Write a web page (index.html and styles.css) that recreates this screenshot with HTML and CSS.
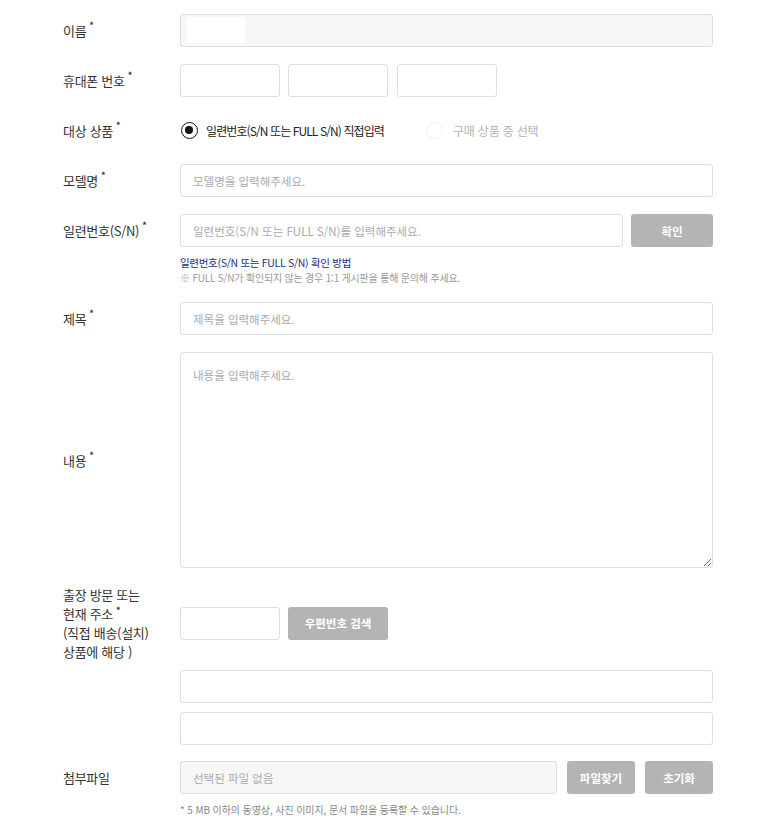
FILE: index.html
```html
<!DOCTYPE html>
<html lang="ko">
<head>
<meta charset="utf-8">
<title>문의하기</title>
<link rel="stylesheet" href="styles.css">
</head>
<body>
<form class="form">
  <div class="row">
    <div class="label">이름<span class="req">*</span></div>
    <div class="field">
      <div class="masked"><input class="input readonly" type="text" readonly><span class="mask"></span></div>
    </div>
  </div>

  <div class="row">
    <div class="label">휴대폰 번호<span class="req">*</span></div>
    <div class="field phone">
      <input class="input short" type="text">
      <input class="input short" type="text">
      <input class="input short" type="text">
    </div>
  </div>

  <div class="row">
    <div class="label">대상 상품<span class="req">*</span></div>
    <div class="field radios">
      <label class="radio on"><span class="dot"></span>일련번호(S/N 또는 FULL S/N) 직접입력</label>
      <label class="radio off"><span class="dot"></span>구매 상품 중 선택</label>
    </div>
  </div>

  <div class="row">
    <div class="label">모델명<span class="req">*</span></div>
    <div class="field"><input class="input" type="text" placeholder="모델명을 입력해주세요."></div>
  </div>

  <div class="row top">
    <div class="label">일련번호(S/N)<span class="req">*</span></div>
    <div class="field">
      <div class="inline">
        <input class="input grow" type="text" placeholder="일련번호(S/N 또는 FULL S/N)를 입력해주세요.">
        <button type="button" class="btn wide">확인</button>
      </div>
      <a class="help-link">일련번호(S/N 또는 FULL S/N) 확인 방법</a>
      <p class="help-note">※ FULL S/N가 확인되지 않는 경우 1:1 게시판을 통해 문의해 주세요.</p>
    </div>
  </div>

  <div class="row">
    <div class="label">제목<span class="req">*</span></div>
    <div class="field"><input class="input" type="text" placeholder="제목을 입력해주세요."></div>
  </div>

  <div class="row">
    <div class="label">내용<span class="req">*</span></div>
    <div class="field"><textarea class="textarea" placeholder="내용을 입력해주세요."></textarea></div>
  </div>

  <div class="row tight">
    <div class="label multi">출장 방문 또는<br>현재 주소<span class="req">*</span><br>(직접 배송(설치)<br>상품에 해당 )</div>
    <div class="field inline">
      <input class="input short" type="text">
      <button type="button" class="btn postal">우편번호 검색</button>
    </div>
  </div>
  <div class="row tight">
    <div class="label"></div>
    <div class="field"><input class="input" type="text"></div>
  </div>
  <div class="row addr-last">
    <div class="label"></div>
    <div class="field"><input class="input" type="text"></div>
  </div>

  <div class="row top">
    <div class="label">첨부파일</div>
    <div class="field">
      <div class="inline">
        <input class="input grow readonly" type="text" placeholder="선택된 파일 없음" readonly>
        <button type="button" class="btn file">파일찾기</button>
        <button type="button" class="btn file">초기화</button>
      </div>
      <p class="file-note">* 5 MB 이하의 동영상, 사진 이미지, 문서 파일을 등록할 수 있습니다.</p>
    </div>
  </div>
</form>
</body>
</html>
```

FILE: styles.css
```css
* { box-sizing: border-box; }
html, body { margin: 0; padding: 0; background: #fff; }
body {
  font-family: "Noto Sans CJK KR", "Noto Sans", sans-serif;
  color: #333;
}
.form {
  padding: 14px 0 0 63px;
  width: 713px;
}
.row {
  display: grid;
  grid-template-columns: 117px 533px;
  align-items: center;
  margin-bottom: 17px;
}
.row.top { align-items: start; }
.row.tight { margin-bottom: 9px; }
.row.addr-last { margin-bottom: 16px; }

.label {
  font-size: 13px;
  color: #333;
  min-height: 33px;
  display: flex;
  align-items: center;
  line-height: 19px;
  letter-spacing: -0.3px;
}
.label.multi { display: block; min-height: 0; }
.req {
  font-size: 9px;
  font-weight: 700;
  position: relative;
  top: -5px;
  margin-left: 3px;
  line-height: 1;
}
.field { min-width: 0; }

.input {
  display: block;
  width: 100%;
  height: 33px;
  border: 1px solid #dedede;
  border-radius: 3px;
  background: #fff;
  padding: 0 12px;
  font-family: inherit;
  font-size: 11.5px;
  color: #333;
  outline: none;
}
.input::placeholder { color: #aaa; }
.input.readonly { background: #f7f7f7; }
.input.short { width: 100px; flex: none; }
.input.grow { flex: 1; width: auto; min-width: 0; }

.masked { position: relative; }
.mask {
  position: absolute;
  left: 7px;
  top: 3px;
  width: 58px;
  height: 26px;
  background: #fff;
}

.phone { display: flex; gap: 8px; }
.phone .input:nth-child(3) { margin-left: 1px; }

.inline { display: flex; gap: 8px; align-items: center; }

.radios {
  display: flex;
  align-items: center;
  height: 33px;
}
.radio {
  display: flex;
  align-items: center;
  font-size: 12px;
  letter-spacing: -0.9px;
}
.radio .dot {
  width: 17px;
  height: 17px;
  border-radius: 50%;
  margin-right: 8px;
  position: relative;
  flex: none;
}
.radio.on { color: #222; margin-left: 1px; margin-right: 42px; }
.radio.on .dot { border: 1.5px solid #111; }
.radio.on .dot::after {
  content: "";
  position: absolute;
  left: 3px; top: 3px;
  width: 8px; height: 8px;
  border-radius: 50%;
  background: #111;
}
.radio.off { color: #b5b5b5; letter-spacing: -0.2px; }
.radio.off .dot { border: 1px solid #efefef; margin-right: 10px; }

.btn {
  height: 33px;
  border: 0;
  border-radius: 3px;
  background: #b4b4b4;
  color: #fff;
  font-family: inherit;
  font-size: 11.5px;
  font-weight: 700;
  padding: 0;
  flex: none;
}
.btn.wide { width: 82px; }
.btn.postal { width: 100px; }
.btn.file { width: 68px; margin-left: 2px; }

.help-link {
  display: block;
  margin-top: 8px;
  font-size: 10.5px;
  line-height: 15px;
  color: #1d2d8a;
  letter-spacing: -0.3px;
}
.help-note {
  margin: 0;
  font-size: 10px;
  line-height: 15px;
  color: #9a9a9a;
  letter-spacing: -0.2px;
}

.textarea {
  display: block;
  width: 100%;
  height: 216px;
  border: 1px solid #dedede;
  border-radius: 3px;
  padding: 14px 12px;
  font-family: inherit;
  font-size: 11.5px;
  color: #333;
  resize: vertical;
  outline: none;
}
.textarea::placeholder { color: #aaa; }

.file-note {
  margin: 9px 0 0;
  font-size: 10px;
  line-height: 14px;
  color: #888;
  letter-spacing: -0.1px;
}
```
